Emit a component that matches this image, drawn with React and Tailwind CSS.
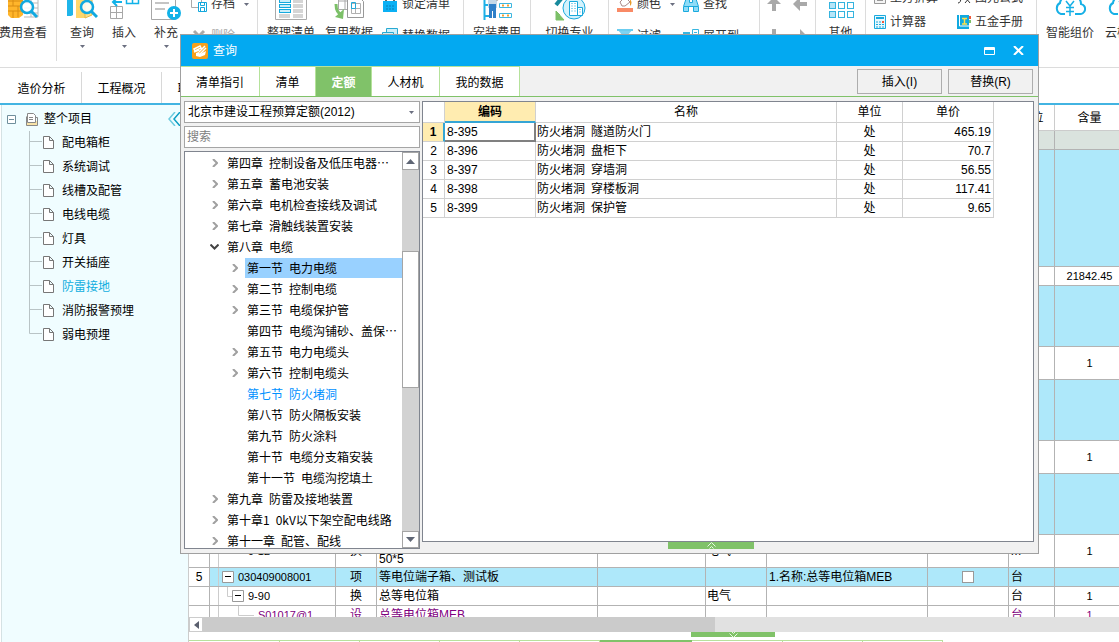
import React from 'react';

const projectItems = ['配电箱柜', '系统调试', '线槽及配管', '电线电缆', '灯具', '开关插座', '防雷接地', '消防报警预埋', '弱电预埋'];

const dialogTabs = [
    { name: '清单指引', width: 'w-[79px]' },
    { name: '清单', width: 'w-14' },
    { name: '定额', width: 'w-14', active: true },
    { name: '人材机', width: 'w-17' },
    { name: '我的数据', width: 'w-20' },
];

const chapters = [
    { no: '第四章', title: '控制设备及低压电器…', arrow: 'right' },
    { no: '第五章', title: '蓄电池安装', arrow: 'right' },
    { no: '第六章', title: '电机检查接线及调试', arrow: 'right' },
    { no: '第七章', title: '滑触线装置安装', arrow: 'right' },
    { no: '第八章', title: '电缆', arrow: 'down' },
    { no: '第一节', title: '电力电缆', arrow: 'right', sub: true, selected: true },
    { no: '第二节', title: '控制电缆', arrow: 'right', sub: true },
    { no: '第三节', title: '电缆保护管', arrow: 'right', sub: true },
    { no: '第四节', title: '电缆沟铺砂、盖保…', sub: true },
    { no: '第五节', title: '电力电缆头', arrow: 'right', sub: true },
    { no: '第六节', title: '控制电缆头', arrow: 'right', sub: true },
    { no: '第七节', title: '防火堵洞', sub: true, current: true },
    { no: '第八节', title: '防火隔板安装', sub: true },
    { no: '第九节', title: '防火涂料', sub: true },
    { no: '第十节', title: '电缆分支箱安装', sub: true },
    { no: '第十一节', title: '电缆沟挖填土', sub: true },
    { no: '第九章', title: '防雷及接地装置', arrow: 'right' },
    { no: '第十章1', title: '0kV以下架空配电线路', arrow: 'right' },
    { no: '第十一章', title: '配管、配线', arrow: 'right' },
];

const quotas = [
    { code: '8-395', name: '隧道防火门', price: '465.19' },
    { code: '8-396', name: '盘柜下', price: '70.7' },
    { code: '8-397', name: '穿墙洞', price: '56.55' },
    { code: '8-398', name: '穿楼板洞', price: '117.41' },
    { code: '8-399', name: '保护管', price: '9.65' },
];

const gridRows = [
    { height: 'h-[19px]', color: 'bg-[#dae3de]' },
    { height: 'h-[117px]', color: 'bg-[#aee8fa]' },
    { height: 'h-[19px]', amount: '21842.45' },
    { height: 'h-[61px]', color: 'bg-[#aee8fa]' },
    { height: 'h-[33px]', amount: '1' },
    { height: 'h-[61px]', color: 'bg-[#aee8fa]' },
    { height: 'h-[33px]', amount: '1' },
    { height: 'h-[61px]', color: 'bg-[#aee8fa]' },
    { height: 'h-[33px]', level: 3, code: '9-12', type: '换', name: '50*5', major: '电气', unit: 'm', amount: '1' },
    { height: 'h-[19px]', color: 'bg-[#aee8fa]', level: 1, no: '5', code: '030409008001', type: '项', name: '等电位端子箱、测试板', feature: '1.名称:总等电位箱MEB', check: true, unit: '台' },
    { height: 'h-[19px]', level: 2, code: '9-90', type: '换', name: '总等电位箱', major: '电气', unit: '台', amount: '1' },
    { height: 'h-[19px]', color: 'text-[#800080]', level: 4, code: 'S01017@1', type: '设', name: '总等电位箱MEB', unit: '台', amount: '1' },
];

/* ---------- toolbar icons ---------- */

const Glass = ({ x = 0, y = 0 }) => (
    <g transform={`translate(${x} ${y})`} fill="none" stroke="#11a9e0">
        <circle cx="8" cy="8" r="6" fill="#fff" fillOpacity=".85" strokeWidth="2.5" />
        <path d="M12.5 12.5 18 18" strokeWidth="3" />
    </g>
);

const CostIcon = () => (
    <svg width="32" height="32" viewBox="0 0 32 32">
        <path d="M1 6h15v20l-4 3H4l-3-3z" fill="#ffb52b" />
        <path d="M1 12h15M1 17h15M1 22h15M6 10v7M11 17v11M6 22v7" stroke="#d98c12" fill="none" />
        <path d="M17 9h14v19H17M17 14h14M17 19h14M17 24h14M24 9v19" stroke="#b9b9b9" fill="none" />
        <Glass x={12} y={10} />
    </svg>
);

const QueryIcon = () => (
    <svg width="32" height="32" viewBox="0 0 32 32">
        <path d="M1 4h6v22l-2 1H1z" fill="#1fb5ea" />
        <path d="M10 4h9v25h-9z" fill="#ffd76b" />
        <path d="M19 4h7v22l-7 3z" fill="#ffe08a" stroke="#e5b84a" />
        <Glass x={13} y={10} />
    </svg>
);

const InsertIcon = () => (
    <svg width="32" height="32" viewBox="0 0 32 32" fill="none">
        <path d="M2.500 17.500h12v12h-12zM8.500 17.500v12M2.500 23.500h12" stroke="#a7a7a7" />
        <path d="M18.500 6.500h12v8h-12zM24.500 6.500v8" stroke="#11b2e8" strokeWidth="1.500" />
        <path d="M6 13h8M9 9l-4 4 4 4" stroke="#11b2e8" strokeWidth="2" />
    </svg>
);

const AddIcon = () => (
    <svg width="32" height="32" viewBox="0 0 32 32">
        <path d="M1.500 2.500h24v28h-24z" fill="#fff" stroke="#a7a7a7" />
        <path d="M5 14h14M5 20h10" stroke="#c4c4c4" strokeWidth="2" />
        <circle cx="24" cy="24" r="7" fill="#11b2e8" />
        <path d="M24 20v8M20 24h8" stroke="#fff" strokeWidth="2" />
    </svg>
);

const ListIcon = () => (
    <svg width="32" height="32" viewBox="0 0 32 32">
        <path d="M.5.500h31v30H.5z" fill="#fff" stroke="#aaa" />
        {[5, 10, 15, 20].map((y) => (
            <g key={y}>
                <rect x="4.500" y={y + 0.5} width="11" height="3" fill="#c9eefa" stroke="#15a9dd" />
                <rect x="18" y={y} width="10" height="4" fill="#d5d5d5" />
            </g>
        ))}
        <path d="M4 25h11v4H4zM18 25h10v4H18z" fill="#d5d5d5" />
    </svg>
);

const ReuseIcon = () => (
    <svg width="32" height="32" viewBox="0 0 32 32" fill="none">
        <path d="M5.500 4.500h18v16h-18zM12 4v16M5 12h18" stroke="#aaa" />
        <path d="M14.500 8.500h12l4 4v16h-16z" fill="#fff" stroke="#999" />
        <path d="M18.500 14.500h9v10h-9zM18 19.500h9M22.500 14v10" stroke="#b0b0b0" />
        <path d="M18.500 13.500h4v6h-4z" stroke="#22a9d8" />
        <path d="M3 15q0 9 6 11" stroke="#7cc068" strokeWidth="3" />
        <path d="m11 20-1 10-8-2z" fill="#7cc068" />
    </svg>
);

const WorkerIcon = () => (
    <svg width="32" height="32" viewBox="0 0 32 32">
        <path d="M3.500 3v28M3 27h8M3 16h6" stroke="#1db0e6" strokeWidth="2" fill="none" />
        <path d="M7 9h9v10H7z" fill="#c5d9e8" />
        <path d="M8 15h7v14h-3v-7h-1v7H8z" fill="#2f80c8" />
        <path d="m15 11 5-4" stroke="#aaa" strokeWidth="3" />
        {[5, 14, 24].map((y) => (
            <g key={y} fill="none">
                <path d={`M18.500 ${y}.5h12v4h-12z`} fill="#fff" stroke="#3db6df" />
                <path d={`M21 ${y + 2.5}h2M26 ${y + 2.5}h2`} stroke="#f7a12f" strokeWidth="2" />
            </g>
        ))}
    </svg>
);

const MajorIcon = () => (
    <svg width="32" height="32" viewBox="0 0 32 32" fill="none">
        <path d="m2 16 9-11" stroke="#17899c" strokeWidth="4" />
        <circle cx="20" cy="19" r="11" fill="#d3f2fc" stroke="#1aa9dc" />
        <path d="M15.500 12.500h8v14h-8zM23.500 18.500h5v8h-5z" fill="#fff" stroke="#1aa9dc" />
        <path d="M18 14v10M21 14v10M26 20v5" stroke="#1aa9dc" strokeDasharray="1 1.500" />
        <path d="M2 22v9h8zM2 22l4 4" fill="#7cc068" stroke="#7cc068" />
    </svg>
);

const OtherIcon = () => (
    <svg width="32" height="32" viewBox="0 0 32 32" fill="#fff" stroke="#35b4df">
        {[4, 13, 22].map((y) => (
            <g key={y}>
                <rect x="4.500" y={y + 0.5} width="6" height="6" fill="#b5e5f8" />
                <rect x="13.500" y={y + 0.5} width="6" height="6" />
                <rect x="22.500" y={y + 0.5} width="6" height="6" />
            </g>
        ))}
    </svg>
);

const CloudIcon = () => (
    <svg width="32" height="32" viewBox="0 0 32 32" fill="none" stroke="#16b0e6" strokeWidth="2">
        <path d="M11 25H7a6 6 0 0 1-1-11 7 7 0 0 1 9-6 8 8 0 0 1 12 7 5 5 0 0 1-2 10h-4" />
        <path d="m12 12 4 5 4-5M16 17v10M12 18.500h8M12 22.500h8" strokeWidth="1.500" />
    </svg>
);

const SaveIcon = () => (
    <svg width="16" height="16" viewBox="0 0 16 16" fill="none">
        <path d="M.5.500h10v11H.5z" stroke="#aaa" />
        <path d="M7.500 6.500h8v9h-8z" fill="#fff" stroke="#13a8dd" />
        <path d="M9.500 6.500v3h4v-3M9.500 15.500v-4h4v4" stroke="#13a8dd" />
    </svg>
);

const DeleteIcon = () => (
    <svg width="16" height="16" viewBox="0 0 16 16" stroke="#aaa" strokeWidth="3">
        <path d="m3 3 10 10M13 3 3 13" />
    </svg>
);

const LockIcon = () => (
    <svg width="16" height="16" viewBox="0 0 16 16">
        <path d="M4 7V3q4-4 8 0v4" fill="none" stroke="#666" strokeWidth="2" />
        <path d="M1 5h14v11H1z" fill="#0bb0f4" />
        <path d="M4 10h8M4 13h8" stroke="#0c7eb5" strokeDasharray="2 1" />
    </svg>
);

const ReplaceIcon = () => (
    <svg width="16" height="16" viewBox="0 0 16 16" fill="#cdf0fb" stroke="#28a9d2">
        <path d="M4.500.500h11v9h-11z" />
        <path d="M.5 4.500h11v9H.5z" />
        <path d="M.5 6.500h11" />
    </svg>
);

const FillIcon = () => (
    <svg width="16" height="16" viewBox="0 0 16 16">
        <path d="m3 6 5-5 5 5-5 4H5z" fill="#fff" stroke="#a88" />
        <path d="M13 3q3 4 0 7z" fill="#e89a2a" />
        <path d="M0 12h16v4H0z" fill="#f98a66" />
    </svg>
);

const FilterIcon = () => (
    <svg width="16" height="16" viewBox="0 0 16 16">
        <path d="M0 1h16l-6 7v8H6V8z" fill="#7ed3f2" />
        <path d="M0 1h16v2H0z" fill="#6bcdf0" />
    </svg>
);

const FindIcon = () => (
    <svg width="16" height="16" viewBox="0 0 16 16" fill="#8fdcf7" stroke="#1aaade">
        <path d="M3.500 1.500h3v5h3v-5h3l3 9v5h-5v-5h-5v5h-5v-5z" />
        <path d="M1 10.500h5M10 10.500h5" />
    </svg>
);

const ExpandIcon = () => (
    <svg width="16" height="16" viewBox="0 0 16 16" fill="none" stroke="#38b6e0">
        <path d="M0 5h7" strokeWidth="2" />
        <path d="M9.500 1.500h6v13h-6zM11 4.500h3M11 7.500h3" />
    </svg>
);

const CalcIcon = ({ color = '#1aaade' }) => (
    <svg width="12" height="16" viewBox="0 0 12 16">
        <path d="M.5 1.500h11v13H.5z" fill="#e9f8fd" stroke={color} />
        <path d="M2 3h8v2H2z" fill={color} />
        <path d="M2 8h8M2 10.500h8M2 13h8" stroke={color} strokeDasharray="2 1" />
        <path d="M8 7h2v2H8z" fill="#f15a3a" />
    </svg>
);

const PaperIcon = () => (
    <svg width="12" height="16" viewBox="0 0 12 16" fill="#f4f4f4" stroke="#999">
        <path d="M.5 1.500h11v12H.5zM3 8.500h6M3 10.500h6" />
    </svg>
);

const BookIcon = () => (
    <svg width="14" height="16" viewBox="0 0 14 16">
        <path d="M0 1h12v14H0z" fill="#11a9e0" />
        <path d="M12 2h2v3h-2z" fill="#f15a3a" />
        <path d="M12 6h2v3h-2z" fill="#7cc068" />
        <path d="M5 4.500h5M7.500 4v6M5 10h5" stroke="#ffe14a" strokeWidth="1.500" />
        <path d="M2.500 1v11H14" stroke="#fff" fill="none" />
    </svg>
);

const FormulaIcon = () => (
    <svg width="14" height="16" viewBox="0 0 14 16" fill="none" stroke="#333">
        <path d="M1 13q3 0 3-6t3-5M8 7l5 6M13 7l-5 6" />
    </svg>
);

const Arrow = ({ rotate = '' }) => (
    <svg width="16" height="16" viewBox="0 0 16 16" fill="#a9a9a9" className={rotate}>
        <path d="m8 1 7 7h-5v7H6V8H1z" />
    </svg>
);

const Caret = ({ className = '' }) => (
    <svg width="5" height="3" viewBox="0 0 5 3" className={className}>
        <path d="M0 0h5L2.500 3z" fill="#6b6f80" />
    </svg>
);

/* ---------- toolbar ---------- */

const BigButton = ({ icon: Icon, label, width, caret }) => (
    <button className={`flex flex-col items-center shrink-0 whitespace-nowrap ${width}`}>
        <Icon />
        <span className="mt-1 h-4 leading-4">{label}</span>
        <span className="h-5 pt-1">{caret && <Caret />}</span>
    </button>
);

const SmallButton = ({ icon: Icon, label, caret, height = 'h-8', muted }) => (
    <button className={`flex items-center gap-1 whitespace-nowrap ${height} ${muted ? 'text-[#aaa]' : ''}`}>
        <Icon />
        {label}
        {caret && <Caret className="ml-[5px]" />}
    </button>
);

const Group = ({ width, children }) => (
    <div className={`flex items-end shrink-0 h-[61px] border-r border-[#dcdcdc] ${width}`}>{children}</div>
);

const Toolbar = () => (
    <header className="flex shrink-0 h-17 overflow-hidden border-b border-[#dcdcdc] text-[#333]">
        <Group width="w-[57px]">
            <BigButton icon={CostIcon} label="费用查看" width="w-[46px]" />
        </Group>
        <Group width="w-[201px] pl-1">
            <BigButton icon={QueryIcon} label="查询" width="w-[42px]" caret />
            <BigButton icon={InsertIcon} label="插入" width="w-[42px]" caret />
            <BigButton icon={AddIcon} label="补充" width="w-[42px]" caret />
            <div className="flex flex-col pl-1 pb-[9px]">
                <SmallButton icon={SaveIcon} label="存档" caret />
                <SmallButton icon={DeleteIcon} label="删除" muted />
            </div>
        </Group>
        <Group width="w-[206px] pl-1">
            <BigButton icon={ListIcon} label="整理清单" width="w-[58px]" />
            <BigButton icon={ReuseIcon} label="复用数据" width="w-[58px]" />
            <div className="flex flex-col pl-1 pb-[9px]">
                <SmallButton icon={LockIcon} label="锁定清单" />
                <SmallButton icon={ReplaceIcon} label="替换数据" />
            </div>
        </Group>
        <Group width="w-[67px] justify-center">
            <BigButton icon={WorkerIcon} label="安装费用" width="w-14" />
        </Group>
        <Group width="w-[78px] justify-center">
            <BigButton icon={MajorIcon} label="切换专业" width="w-14" />
        </Group>
        <Group width="w-[151px] pl-2">
            <div className="flex flex-col w-[66px] pb-[9px]">
                <SmallButton icon={FillIcon} label="颜色" caret />
                <SmallButton icon={FilterIcon} label="过滤" />
            </div>
            <div className="flex flex-col pb-[9px]">
                <SmallButton icon={FindIcon} label="查找" />
                <SmallButton icon={ExpandIcon} label="展开到" />
            </div>
        </Group>
        <Group width="w-14 pl-1.5">
            <div className="grid grid-cols-2 gap-x-2.5 pb-[9px]">
                <button aria-label="上移" className="h-8"><Arrow /></button>
                <button aria-label="升级" className="h-8"><Arrow rotate="-rotate-90" /></button>
                <button aria-label="下移" className="h-8"><Arrow rotate="rotate-180" /></button>
                <button aria-label="降级" className="h-8"><Arrow rotate="rotate-90" /></button>
            </div>
        </Group>
        <Group width="w-[50px] justify-center">
            <BigButton icon={OtherIcon} label="其他" width="w-12" />
        </Group>
        <Group width="w-[171px] pl-2">
            <div className="flex flex-col w-[83px] pb-[27px]">
                <SmallButton icon={PaperIcon} label="土方折算" height="h-6" />
                <SmallButton icon={CalcIcon} label="计算器" height="h-6" />
            </div>
            <div className="flex flex-col pb-[27px]">
                <SmallButton icon={FormulaIcon} label="图元公式" height="h-6" />
                <SmallButton icon={BookIcon} label="五金手册" height="h-6" />
            </div>
        </Group>
        <div className="flex items-end h-[61px] pl-1">
            <BigButton icon={CloudIcon} label="智能组价" width="w-[58px]" />
            <BigButton icon={CloudIcon} label="云检查" width="w-12" />
        </div>
    </header>
);

/* ---------- page behind the dialog ---------- */

const ProjectTree = () => (
    <aside className="w-[187px] shrink-0 bg-[#f0fdff] border-l border-[#d5e2e4] pt-0.5 text-black">
        <div className="flex items-center h-6 pl-[5px]">
            <svg width="9" height="9" viewBox="0 0 9 9" fill="#fff" stroke="#6f8f9c">
                <path d="M.5.500h8v8h-8zM2 4.500h5" />
            </svg>
            <svg width="13" height="13" viewBox="0 0 13 13" fill="#fff" stroke="#888" className="ml-[9px]">
                <path d="M1.500 3.500v9h11v-4" fill="#f8e3a8" />
                <path d="M2.500.500h6l2 2v7h-8zM4 4.500h4M4 6.500h4" />
                <path d="M10.500 4.500h2v6" fill="none" />
            </svg>
            <span className="ml-1.5">整个项目</span>
            <button aria-label="收起" className="ml-auto mr-1.5">
                <svg width="14" height="14" viewBox="0 0 14 14" fill="none" strokeWidth="1.500">
                    <path d="M7 0 1 7l6 7" stroke="#6ccbe0" />
                    <path d="m12 0-6 7 6 7" stroke="#0e9fc4" />
                </svg>
            </button>
        </div>
        <ul>
            {projectItems.map((name, i) => (
                <li key={name} className="flex items-center h-6 pl-[27px]">
                    <svg width="13" height="24" viewBox="0 0 13 24" fill="none" stroke="#b9c4c6">
                        <path d={i === projectItems.length - 1 ? 'M.5 0v10.500H13' : 'M.5 0v24M0 10.500h13'} />
                    </svg>
                    <svg width="11" height="13" viewBox="0 0 11 13" fill="#fff" stroke="#777" className="ml-px mb-0.5">
                        <path d="M.5.500h6l4 4v8H.5zM6.500.500v4h4" />
                    </svg>
                    <button className={`ml-2 ${name === '防雷接地' ? 'text-[#10aee0]' : ''}`}>{name}</button>
                </li>
            ))}
        </ul>
    </aside>
);

const Toggle = () => (
    <svg width="12" height="12" viewBox="0 0 12 12" fill="#fff" className="shrink-0">
        <path d="M.5.500h11v11H.5z" stroke="#999" />
        <path d="M3 5.500h6" stroke="#000" />
    </svg>
);

const CodeCell = ({ level, code }) => (
    <div className="flex h-full items-center pl-2">
        <span className="self-stretch border-l border-[#ccc] w-1" />
        {level === 1 && <Toggle />}
        {level === 2 && (
            <>
                <svg width="10" height="18" viewBox="0 0 10 18" fill="none" stroke="#ccc">
                    <path d="M5.500 0v9.500H10" />
                </svg>
                <Toggle />
            </>
        )}
        {level === 3 && <span className="w-[22px]" />}
        {level === 4 && (
            <svg width="32" height="18" viewBox="0 0 32 18" fill="none" stroke="#ccc">
                <path d="M16.500 0v9.500H32" />
            </svg>
        )}
        <span className="ml-1">{code}</span>
    </div>
);

const MainGrid = () => {
    const cell = 'border-r border-b border-[#b3b3b3] p-0';
    return (
        <div className="flex-1 min-h-0 overflow-hidden">
            <table className="table-fixed border-separate border-spacing-0 w-full min-w-[936px] text-black leading-4">
                <colgroup>
                    <col className="w-[21px]" />
                    <col className="w-[126px]" />
                    <col className="w-[41px]" />
                    <col />
                    <col className="w-[108px]" />
                    <col className="w-[61px]" />
                    <col className="w-[161px]" />
                    <col className="w-[81px]" />
                    <col className="w-[46px]" />
                    <col className="w-[70px]" />
                </colgroup>
                <thead>
                    <tr className="h-[26px]">
                        {['', '', '', '', '', '', '', '', '单位', '含量'].map((h, i) => (
                            <th key={i} className="border-r border-b border-[#ccc] p-0 font-normal">{h}</th>
                        ))}
                    </tr>
                </thead>
                <tbody>
                    {gridRows.map((r, i) => (
                        <tr key={i} className={`${r.height} ${r.color || ''}`}>
                            <td className={`${cell} bg-white text-center`}>{r.no}</td>
                            <td className={`${cell} h-px text-[11px]`}>{r.code && <CodeCell level={r.level} code={r.code} />}</td>
                            <td className={`${cell} text-center`}>{r.type}</td>
                            <td className={`${cell} pl-0.5 ${r.level === 3 ? 'align-bottom' : ''}`}>{r.name}</td>
                            <td className={cell} />
                            <td className={`${cell} pl-px`}>{r.major}</td>
                            <td className={`${cell} pl-0.5 whitespace-nowrap`}>{r.feature}</td>
                            <td className={`${cell} text-center`}>
                                {r.check && <input type="checkbox" aria-label="主要清单" className="block mx-auto appearance-none size-3 bg-white border border-[#999]" />}
                            </td>
                            <td className={`${cell} pl-0.5`}>{r.unit}</td>
                            <td className={`${cell} text-center text-[11px]`}>{r.amount}</td>
                        </tr>
                    ))}
                </tbody>
            </table>
        </div>
    );
};

const Chevrons = ({ flip }) => (
    <svg width="9" height="7" viewBox="0 0 9 7" fill="none" stroke="#e9f7e4" className={flip ? 'rotate-180' : ''}>
        <path d="M.5 4.500 4.500.500l4 4M2.500 6.500l2-2 2 2" />
    </svg>
);

const Workspace = () => (
    <main className="flex flex-1 min-h-0 ml-px">
        <ProjectTree />
        <div className="flex flex-col flex-1 min-w-0 border-l border-[#ccc]">
            <MainGrid />
            <div className="flex h-[15px] shrink-0 bg-[#e1e1e1]">
                <button aria-label="向左滚动" className="flex items-center justify-center w-3.5 bg-white border border-[#ccc]">
                    <svg width="5" height="8" viewBox="0 0 5 8"><path d="M5 0v8L0 4z" fill="#5a5f6e" /></svg>
                </button>
                <div className="w-[512px] bg-[#cbcbcb]" />
            </div>
            <div className="h-2 shrink-0">
                <button aria-label="收起面板" className="flex justify-center items-center h-[5px] w-[84px] ml-[502px] bg-[#80c269]"><Chevrons flip /></button>
            </div>
            <div className="flex h-0.5 shrink-0">
                {[91, 80, 80, 80, 80].map((w, i) => (
                    <div key={i} className="border-t border-r border-[#b8e09c]" style={{ width: w }} />
                ))}
                <div className="w-[92px] bg-[#80c269]" />
                {[91, 80, 80].map((w, i) => (
                    <div key={i} className="border-t border-r border-[#b8e09c]" style={{ width: w }} />
                ))}
            </div>
        </div>
    </main>
);

/* ---------- query dialog ---------- */

const TitleBar = () => (
    <div className="flex items-center h-[31px] shrink-0 bg-[#03a9f1] text-white pl-[11px] pr-3.5">
        <svg width="16" height="16" viewBox="0 0 16 16">
            <rect width="16" height="16" rx="2" fill="#f8a01c" />
            <path d="m2 6 6-3 1 2-6 3zM2 9l5-2M13 3 7 9M14 5 8 11" fill="none" stroke="#fff" strokeWidth="1.500" />
            <path d="m4 10 3-1 1 2 6-3-1 4-5 2-4-1z" fill="#fff" />
        </svg>
        <h1 className="ml-[5px]">查询</h1>
        <button aria-label="最大化" className="ml-auto">
            <svg width="11" height="8" viewBox="0 0 11 8" fill="none" stroke="#fff">
                <path d="M.5.500h10v7H.5zM0 1.500h11M0 2.500h11" />
            </svg>
        </button>
        <button aria-label="关闭" className="ml-[18px]">
            <svg width="11" height="9" viewBox="0 0 11 9" stroke="#fff" strokeWidth="2">
                <path d="m1 0 9 9M10 0 1 9" />
            </svg>
        </button>
    </div>
);

const DialogTabs = () => (
    <div className="flex h-[31px] shrink-0 border-b border-[#80c269] text-black">
        {dialogTabs.map((tab) => (
            <button
                key={tab.name}
                className={`${tab.width} border-t border-r border-[#b5e29b] pt-0.5 ${tab.active ? 'bg-[#80c269] text-white font-bold' : 'bg-white'}`}
            >
                {tab.name}
            </button>
        ))}
        <div className="flex items-center gap-1.5 ml-auto pr-[5px]">
            <button className="w-[85px] h-[25px] pt-0.5 border border-[#adadad]">插入(I)</button>
            <button className="w-[85px] h-[25px] pt-0.5 border border-[#adadad]">替换(R)</button>
        </div>
    </div>
);

const TreeArrow = ({ dir }) => {
    if (dir === 'down') {
        return (
            <svg width="9" height="6" viewBox="0 0 9 6" fill="none" stroke="#444" strokeWidth="2">
                <path d="m.5.500 4 4 4-4" />
            </svg>
        );
    }
    return (
        <svg width="6" height="8" viewBox="0 0 6 8" fill="none" stroke="#a0a0a0" strokeWidth="2">
            <path d="m1 0 4 4-4 4" />
        </svg>
    );
};

const ChapterTree = () => (
    <div className="flex flex-1 min-h-0 bg-white border border-[#80858f]">
        <ul className="flex-1 min-w-0 overflow-hidden font-['Noto_Sans_CJK_SC',sans-serif]">
            {chapters.map((c) => (
                <li key={c.no} className={`flex items-center h-[21px] ${c.sub ? 'pl-[45px]' : 'pl-[25px]'}`}>
                    <span className="flex justify-center w-[9px] shrink-0 mr-1.5">{c.arrow && <TreeArrow dir={c.arrow} />}</span>
                    <button
                        className={`flex flex-1 gap-1.5 pl-0.5 h-5 items-center whitespace-nowrap ${c.selected ? 'bg-[#99d1ff]' : ''} ${c.current ? 'text-[#0090ff]' : 'text-black'}`}
                    >
                        <span>{c.no}</span>
                        <span>{c.title}</span>
                    </button>
                </li>
            ))}
        </ul>
        <div className="flex flex-col w-[17px] shrink-0 bg-[#d2d2d2]">
            <button aria-label="向上滚动" className="flex items-center justify-center h-[18px] bg-white border border-[#a5a5a5]">
                <svg width="9" height="5" viewBox="0 0 9 5"><path d="M0 5h9L4.500 0z" fill="#5f6675" /></svg>
            </button>
            <div className="h-[137px] mt-[81px] bg-white border border-[#a5a5a5]" />
            <button aria-label="向下滚动" className="flex items-center justify-center h-[17px] mt-auto bg-white border border-[#a5a5a5]">
                <svg width="9" height="5" viewBox="0 0 9 5"><path d="M0 0h9L4.500 5z" fill="#5f6675" /></svg>
            </button>
        </div>
    </div>
);

const QuotaTable = () => {
    const cell = 'border-r border-b border-[#d0d0d0] p-0';
    return (
        <table className="table-fixed border-separate border-spacing-0 w-[571px] leading-4 text-black">
            <thead>
                <tr className="h-[21px]">
                    <th className={`${cell} w-[22px]`} />
                    <th className="p-0 w-[91px] bg-[#ffecb0] border-r border-r-[#d0d0d0] border-b-2 border-b-[#35a5d5]">编码</th>
                    <th className={`${cell} font-normal`}>名称</th>
                    <th className={`${cell} font-normal w-[66px]`}>单位</th>
                    <th className={`${cell} font-normal w-[91px]`}>单价</th>
                </tr>
            </thead>
            <tbody>
                {quotas.map((q, i) => (
                    <tr key={q.code} className="h-[19px]">
                        <td className={i === 0 ? 'p-0 text-center font-bold bg-[#ffecb0] border-b border-b-[#d0d0d0] border-r-2 border-r-[#35a5d5]' : `${cell} text-center`}>{i + 1}</td>
                        <td className={i === 0 ? 'p-0 pl-0.5 border-r-2 border-b-2 border-[#808080]' : `${cell} pl-0.5`}>{q.code}</td>
                        <td className={cell}>
                            <div className="flex gap-1.5 pl-px">
                                <span>防火堵洞</span>
                                <span>{q.name}</span>
                            </div>
                        </td>
                        <td className={`${cell} text-center`}>处</td>
                        <td className={`${cell} pr-0.5 text-right`}>{q.price}</td>
                    </tr>
                ))}
            </tbody>
        </table>
    );
};

const QueryDialog = () => (
    <section role="dialog" aria-label="查询" className="absolute left-[180px] right-20 top-[34px] bottom-[88px] flex flex-col bg-[#f1f1f1] border border-[#a0a0a0]">
        <TitleBar />
        <DialogTabs />
        <div className="flex flex-1 min-h-0 gap-0.5 pt-1 pl-[3px] pr-1 pb-1">
            <div className="flex flex-col w-[236px] shrink-0 gap-[3px]">
                <div className="relative flex">
                    <select aria-label="定额库" className="appearance-none w-full h-[22px] pl-[3px] bg-white border border-[#a5a5a5] text-black">
                        <option>北京市建设工程预算定额(2012)</option>
                    </select>
                    <Caret className="absolute right-1.5 top-2.5" />
                </div>
                <input aria-label="搜索" placeholder="搜索" className="h-[22px] w-full pl-0.5 bg-white border border-[#a5a5a5] placeholder:text-[#808080]" />
                <ChapterTree />
            </div>
            <div className="flex flex-col flex-1 min-w-0">
                <div className="flex-1 min-h-0 bg-white border border-[#80858f]">
                    <QuotaTable />
                </div>
                <button aria-label="展开面板" className="flex justify-center items-center h-[7px] w-[86px] ml-[246px] bg-[#80c269]"><Chevrons /></button>
            </div>
        </div>
    </section>
);

const App = () => {
    return (
        <div className="relative flex flex-col h-screen overflow-hidden bg-white text-xs font-['Liberation_Sans','Noto_Sans_CJK_SC',sans-serif]">
            <Toolbar />
            <nav className="flex shrink-0 h-[37px] pl-0.5 pt-1 border-b-2 border-[#42b4e2] text-black">
                {['造价分析', '工程概况', '取费设置'].map((name) => (
                    <button key={name} className="w-20 pt-0.5 border-r border-[#d8d8d8]">{name}</button>
                ))}
            </nav>
            <Workspace />
            <QueryDialog />
        </div>
    );
};

export default App;
